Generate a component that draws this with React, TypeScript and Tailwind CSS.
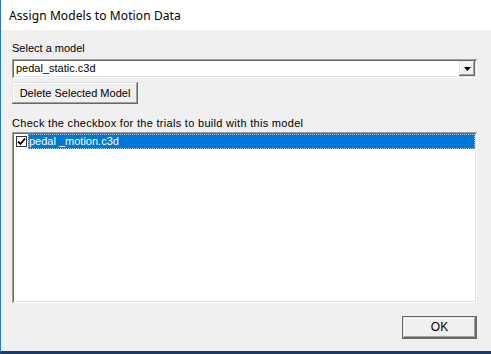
import React from "react";

const sunken =
  "shadow-[inset_1px_1px_0_#a0a0a0,inset_-1px_-1px_0_#ffffff,inset_2px_2px_0_#696969,inset_-2px_-2px_0_#e3e3e3]";
const raised =
  "shadow-[inset_-1px_-1px_0_#696969,inset_1px_1px_0_#e3e3e3,inset_-2px_-2px_0_#a0a0a0,inset_2px_2px_0_#ffffff]";

export default function App() {
  return (
    <div
      className="w-[491px] h-[354px] flex flex-col bg-[#f0f0f0] border-l border-[#2b79d0] border-b-[3px] border-b-[#1a3a6e] overflow-hidden"
      style={{ fontFamily: '"Liberation Sans", Arial, sans-serif' }}
    >
      <div className="h-[30px] shrink-0 bg-white flex items-center pl-[8px] pt-[1px]">
        <span
          className="text-[12px] text-black leading-none tracking-[0.1px]"
          style={{ fontFamily: '"Noto Sans", "Liberation Sans", sans-serif' }}
        >
          Assign Models to Motion Data
        </span>
      </div>
      <div className="flex-1 flex flex-col pl-[11px] pr-[14px] pt-[12px] text-[11px] leading-[13px] text-black">
        <div>Select a model</div>
        <div className={`mt-[4px] h-[19px] bg-white flex items-center ${sunken} p-[2px]`}>
          <div className="flex-1 pl-[2px]">pedal_static.c3d</div>
          <div className={`w-[16px] h-[15px] bg-[#f0f0f0] flex items-center justify-center ${raised}`}>
            <svg width="7" height="4" viewBox="0 0 7 4">
              <path d="M0 0h7L3.5 4z" fill="#000" />
            </svg>
          </div>
        </div>
        <div className="mt-[4px]">
          <button className={`w-[126px] h-[22px] bg-[#f0f0f0] ${raised} text-[11px] leading-[13px]`}>
            Delete Selected Model
          </button>
        </div>
        <div className="mt-[13px] tracking-[0.3px]">
          Check the checkbox for the trials to build with this model
        </div>
        <div className={`mt-[2px] h-[171px] bg-white ${sunken} p-[2px]`}>
          <div className="h-[15px] flex items-center">
            <div className="w-[14px] h-[15px] flex items-center justify-center">
              <div className="w-[11px] h-[11px] bg-white border border-[#333] flex items-center justify-center">
                <svg width="9" height="9" viewBox="0 0 9 9">
                  <path d="M1 4.5L3.5 7L8 1.5" stroke="#000" strokeWidth="1.8" fill="none" />
                </svg>
              </div>
            </div>
            <div className="flex-1 h-[15px] bg-[#0078d7] border border-dotted border-[#9cc8ee] text-white flex items-center">
              pedal _motion.c3d
            </div>
          </div>
        </div>
        <div className="mt-[13px] flex justify-end">
          <button
            className={`w-[75px] h-[23px] bg-[#f0f0f0] border border-[#696969] ${raised} text-[12px]`}
          >
            OK
          </button>
        </div>
      </div>
    </div>
  );
}
